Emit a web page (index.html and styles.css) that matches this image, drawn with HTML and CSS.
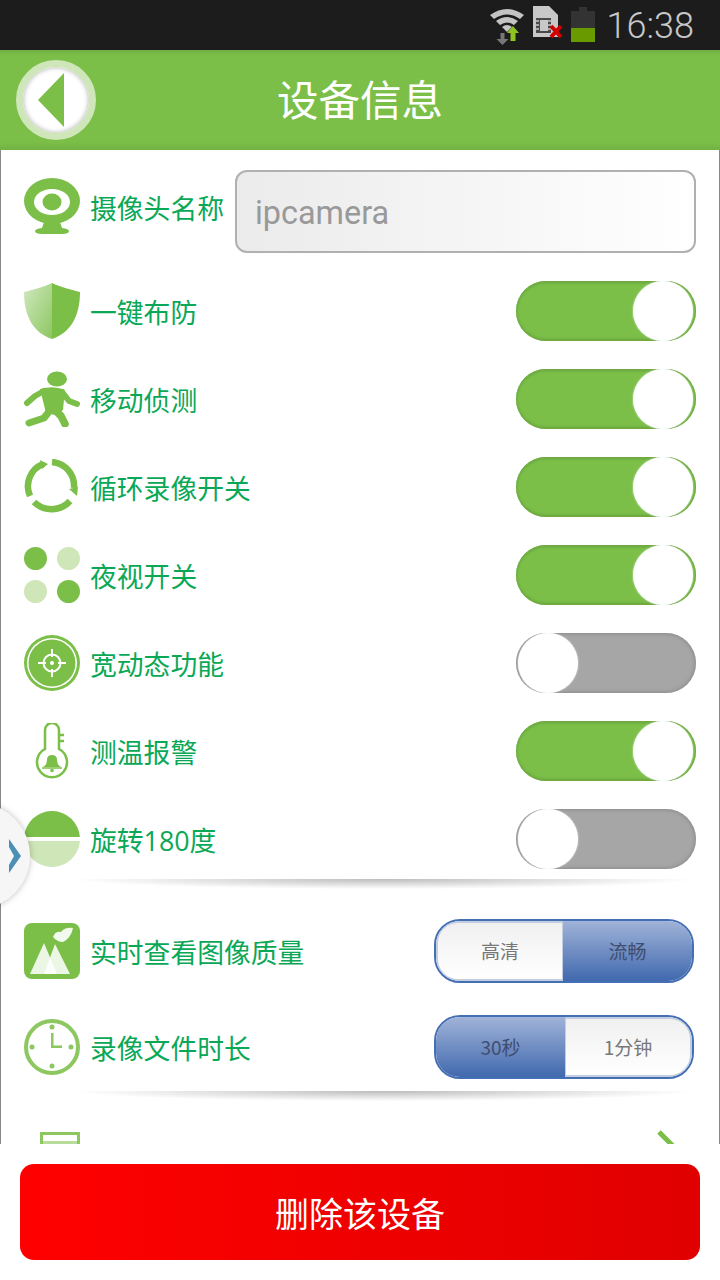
FILE: index.html
```html
<!DOCTYPE html>
<html>
  <head>
    <meta charset="utf-8">
    <title>设备信息</title>
    <link rel="stylesheet" href="styles.css">
  </head>
  <body>
    <div class="phone">
      <div class="status-bar">
        <svg class="st-wifi" width="36" height="38" viewBox="0 0 36 38">
          <path d="M1 7 Q18 -5 35 7 L31 11 Q18 2 5 11Z" fill="#c4c4c4"/>
          <path d="M7 13 Q18 5 29 13 L25 17 Q18 12 11 17Z" fill="#c4c4c4"/>
          <path d="M13 19 Q18 15 23 19 L18 24Z" fill="#c4c4c4"/>
          <path d="M11.500 25h4v6h4l-6 6l-6-6h4z" fill="#777"/>
          <path d="M24 18l6 7h-3.500v8h-5v-8h-3.500z" fill="#8fc31f"/>
        </svg>
        <svg class="st-sim" width="30" height="32" viewBox="0 0 30 32">
          <path d="M0 0H16L25 9V31H0Z" fill="#c8c8c8"/>
          <path d="M3 12H18V27H3Z" fill="#4a4a4a"/>
          <path d="M7 14H15V25H7Z" fill="#c8c8c8"/>
          <path d="M3 15H6M3 19H6M3 23H6M15 15H18M15 19H18M15 23H18" stroke="#c8c8c8" stroke-width="1.500"/>
          <path d="M18 20L28 31M28 20L18 31" stroke="#d00000" stroke-width="4"/>
        </svg>
        <svg class="st-batt" width="24" height="35" viewBox="0 0 24 35">
          <rect x="8" y="0" width="8" height="4" fill="#333"/>
          <rect x="0" y="4" width="24" height="17" fill="#333"/>
          <rect x="0" y="21" width="24" height="14" fill="#699b00"/>
        </svg>
        <span class="clock">16:38</span>
      </div>

      <div class="title-bar">
        <div class="back-btn">
          <svg width="28" height="54" viewBox="0 0 28 54"><path d="M0 27L26 0V54Z" fill="#7bbf49"/></svg>
        </div>
        <h1 class="title">设备信息</h1>
      </div>

      <div class="content">
        <div class="row name-row">
          <svg class="icon soft" viewBox="0 0 56 56">
            <ellipse cx="28" cy="23" rx="28" ry="23" fill="#7bbf49"/>
            <ellipse cx="28" cy="24" rx="18" ry="13" fill="#fff"/>
            <ellipse cx="28" cy="24" rx="9.500" ry="8.500" fill="#7bbf49"/>
            <path d="M20 44H36L38 50Q45 51 45 53Q45 56 38 56H18Q11 56 11 53Q11 51 18 50Z" fill="#7bbf49"/>
          </svg>
          <span class="label">摄像头名称</span>
          <div class="name-input">ipcamera</div>
        </div>

        <div class="row">
          <svg class="icon soft" viewBox="0 0 56 56">
            <defs>
              <linearGradient id="shieldGrad" x1="0" y1="0" x2="1" y2="1">
                <stop offset="0" stop-color="#d2e8c0"/>
                <stop offset="1" stop-color="#8cc760"/>
              </linearGradient>
            </defs>
            <path d="M28 0C20 4 8 7 0 9C0 34 10 50 28 56Z" fill="url(#shieldGrad)"/>
            <path d="M28 0C36 4 48 7 56 9C56 34 46 50 28 56Z" fill="#7bbf49"/>
          </svg>
          <span class="label">一键布防</span>
          <div class="toggle on"><span class="knob"></span></div>
        </div>

        <div class="row">
          <svg class="icon soft" viewBox="0 0 56 56">
            <ellipse cx="33" cy="8" rx="10" ry="7.500" fill="#7bbf49"/>
            <path d="M16 18Q30 14 41 19L39 39L31 44L22 42Z" fill="#7bbf49"/>
            <g fill="none" stroke="#7bbf49" stroke-linecap="round" stroke-linejoin="round">
              <path d="M20 20L11 25L3 32" stroke-width="6"/>
              <path d="M38 21L45 30L53 33" stroke-width="6"/>
              <path d="M27 38L20 47L5 52" stroke-width="7"/>
              <path d="M32 40L37 45L41 53" stroke-width="7.500"/>
            </g>
          </svg>
          <span class="label">移动侦测</span>
          <div class="toggle on"><span class="knob"></span></div>
        </div>

        <div class="row">
          <svg class="icon soft" viewBox="0 0 56 56">
            <g fill="none" stroke="#7bbf49" stroke-width="6.500">
              <path d="M19 5A24 24 0 0 0 6 37"/>
              <path d="M28 3A24 24 0 0 1 50 29"/>
              <path d="M10 43A25 25 0 0 0 46 42"/>
            </g>
            <path d="M45 30L54 28L53 37Z" fill="#7bbf49"/>
            <path d="M16 1L24 5L18 10Z" fill="#7bbf49"/>
          </svg>
          <span class="label">循环录像开关</span>
          <div class="toggle on"><span class="knob"></span></div>
        </div>

        <div class="row">
          <svg class="icon soft" viewBox="0 0 56 56">
            <circle cx="11.500" cy="11.500" r="11.500" fill="#7bbf49"/>
            <circle cx="44.500" cy="11.500" r="11.500" fill="#cfe6b8"/>
            <circle cx="11.500" cy="44.500" r="11.500" fill="#cfe6b8"/>
            <circle cx="44.500" cy="44.500" r="11.500" fill="#7bbf49"/>
          </svg>
          <span class="label">夜视开关</span>
          <div class="toggle on"><span class="knob"></span></div>
        </div>

        <div class="row">
          <svg class="icon" viewBox="0 0 56 56">
            <circle cx="28" cy="28" r="28" fill="#7bbf49"/>
            <circle cx="28" cy="28" r="25" fill="#fff"/>
            <circle cx="28" cy="28" r="23.500" fill="#7bbf49"/>
            <circle cx="28" cy="28" r="8.500" fill="none" stroke="#fff" stroke-width="2"/>
            <circle cx="28" cy="28" r="2" fill="#fff"/>
            <path d="M28 14V42M14 28H42" stroke="#fff" stroke-width="2" stroke-dasharray="8 12"/>
          </svg>
          <span class="label">宽动态功能</span>
          <div class="toggle off"><span class="knob"></span></div>
        </div>

        <div class="row">
          <svg class="icon soft" viewBox="0 0 56 56" fill="none" stroke="#7bbf49" stroke-width="2.500">
            <path d="M21 27V8A7 7 0 0 1 35 8V27A15 15 0 1 1 21 27Z" transform="translate(0 -1)"/>
            <path d="M35 12H40M35 18H40"/>
            <path d="M19 44Q23 42 23 37Q23 32 28 32Q33 32 33 37Q33 42 37 44Z" fill="#7bbf49" stroke="none"/>
            <path d="M18 45H38" stroke-width="1.500"/>
            <circle cx="28" cy="47.500" r="1.800" fill="#7bbf49" stroke="none"/>
          </svg>
          <span class="label">测温报警</span>
          <div class="toggle on"><span class="knob"></span></div>
        </div>

        <div class="row">
          <svg class="icon soft" viewBox="0 0 56 56">
            <path d="M0.070 26A28 28 0 0 1 55.930 26Z" fill="#7bbf49"/>
            <path d="M0.070 30A28 28 0 0 0 55.930 30Z" fill="#cfe6b8"/>
          </svg>
          <span class="label">旋转180度</span>
          <div class="toggle off"><span class="knob"></span></div>
        </div>

        <div class="divider first-divider"></div>

        <div class="row seg-row">
          <svg class="icon soft" viewBox="0 0 56 56">
            <rect width="56" height="56" rx="8" fill="#7bbf49"/>
            <path d="M6 51L20 20L33 51Z" fill="#fff" opacity="0.85"/>
            <path d="M20 51L31 21L46 51Z" fill="#fff" opacity="0.85"/>
            <path d="M29 14Q31 8 37 9Q41 4 49 5Q47 15 39 19Q33 19 29 14Z" fill="#fff" opacity="0.9"/>
          </svg>
          <span class="label">实时查看图像质量</span>
          <div class="segment">
            <span class="seg-item seg-off left">高清</span>
            <span class="seg-item seg-on">流畅</span>
          </div>
        </div>

        <div class="row seg-row">
          <svg class="icon soft" viewBox="0 0 56 56" fill="#8cc760">
            <circle cx="28" cy="28" r="26" fill="none" stroke="#8cc760" stroke-width="4"/>
            <circle cx="28" cy="8" r="2.500"/>
            <circle cx="28" cy="47" r="2.500"/>
            <circle cx="8" cy="28" r="2.500"/>
            <circle cx="47" cy="28" r="2.500"/>
            <path d="M27 14H29.500V26.500H38V29H27Z"/>
          </svg>
          <span class="label">录像文件时长</span>
          <div class="segment">
            <span class="seg-item seg-on">30秒</span>
            <span class="seg-item seg-off right">1分钟</span>
          </div>
        </div>

        <div class="divider"></div>

        <div class="row more-row">
          <svg class="more-icon soft" viewBox="0 0 40 56">
            <rect x="0" y="0" width="40" height="56" fill="#8cc760"/>
            <rect x="3" y="3" width="34" height="50" fill="#fff"/>
            <rect x="3" y="9" width="34" height="3" fill="#b8dc9c"/>
          </svg>
          <svg class="more-arrow" viewBox="0 0 24 40">
            <path d="M2 2L20 20L2 38" fill="none" stroke="#7bbf49" stroke-width="5"/>
          </svg>
        </div>
      </div>

      <div class="bottom-bar">
        <button class="delete-btn">删除该设备</button>
      </div>

      <div class="side-tab">
        <svg width="13" height="34" viewBox="0 0 13 34"><path d="M0 0L12 17L0 34L0 26L5 17L0 8Z" fill="#4a8fb5"/></svg>
      </div>
    </div>
  </body>
</html>
```

FILE: styles.css
```css
* {
  box-sizing: border-box;
}
body {
  margin: 0;
  font-family: "Noto Sans CJK SC", "Noto Sans", sans-serif;
  background: #fff;
}
.phone {
  position: relative;
  width: 720px;
  height: 1280px;
  overflow: hidden;
  display: flex;
  flex-direction: column;
}

/* status bar */
.status-bar {
  height: 50px;
  flex: none;
  background: #1c1c1c;
  display: flex;
  align-items: flex-start;
  padding: 7px 26px 0 0;
  justify-content: flex-end;
}
.st-wifi {
  margin-right: 8px;
  margin-top: 1px;
}
.st-sim {
  margin-right: 8px;
  margin-top: -1px;
}
.st-batt {
  margin-right: 12px;
}
.clock {
  font-family: Roboto, sans-serif;
  font-weight: 300;
  font-size: 36px;
  line-height: 38px;
  color: #c8c8c8;
}

/* title bar */
.title-bar {
  height: 100px;
  flex: none;
  background: linear-gradient(#6fae43 0, #7bbf49 5px, #7bbf49 92px, #72b045 100px);
  display: flex;
  align-items: center;
  justify-content: center;
  position: relative;
  padding-bottom: 4px;
}
.back-btn {
  position: absolute;
  left: 16px;
  top: 10px;
  width: 80px;
  height: 80px;
  border-radius: 50%;
  background: #fff;
  border: 7px solid #cfe6bb;
  box-shadow: inset 0 0 5px #aaa;
  display: flex;
  align-items: center;
  padding-left: 15px;
}
.title {
  margin: 0;
  font-size: 41.5px;
  font-weight: 400;
  color: #fff;
}

/* list */
.content {
  flex: 1;
  min-height: 0;
  overflow: hidden;
  padding: 20px 24px 0;
  border-left: 1px solid #888;
  border-right: 1px solid #888;
  display: flex;
  flex-direction: column;
  gap: 28px;
}
.row {
  display: flex;
  align-items: center;
  flex: none;
  height: 60px;
}
.icon {
  width: 56px;
  height: 56px;
  flex: none;
  margin-left: -1px;
  margin-right: 10px;
}
.soft {
  filter: blur(0.5px);
}
.label {
  font-family: "Open Sans", "Noto Sans CJK SC", sans-serif;
  font-size: 26.8px;
  line-height: 36px;
  padding-top: 3px;
  color: #0aa856;
  white-space: nowrap;
}
.name-row {
  height: 83px;
  align-items: flex-start;
}
.name-row .icon {
  margin-top: 8px;
}
.name-row .label {
  margin-top: 18px;
}
.name-input {
  margin-left: 11px;
  flex: 1;
  height: 83px;
  margin-right: -1px;
  border: 2px solid #b0b0b0;
  border-radius: 12px;
  background: linear-gradient(90deg, #ebebeb, #fff);
  font-family: Roboto, sans-serif;
  font-size: 32.4px;
  line-height: 82px;
  padding-left: 18px;
  color: #999;
}

/* switches */
.toggle {
  margin-left: auto;
  margin-right: -1px;
  width: 180px;
  height: 60px;
  border-radius: 30px;
  display: flex;
  align-items: center;
  padding: 0 3px 0 2px;
}
.toggle.on {
  background: #7bbf49;
  box-shadow: inset 0 2px 3px #6ba53f, inset 0 -2px 3px #6ba53f;
  justify-content: flex-end;
}
.toggle.off {
  background: #a6a6a6;
  box-shadow: inset 0 0 4px #7d7d7d;
}
.knob {
  width: 60px;
  height: 60px;
  border-radius: 50%;
  background: #fff;
  box-shadow: 0 0 2px rgba(255, 255, 255, 0.9);
}

/* separators */
.divider {
  flex: none;
  height: 10px;
  margin: -20px 0 -8px 48px;
  background: radial-gradient(ellipse 50% 100% at 50% 0, #bcbcbc, rgba(255, 255, 255, 0));
}
.first-divider {
  margin: -18px 0 2px 48px;
}

/* two-way selectors */
.seg-row {
  height: 64px;
  margin-bottom: 4px;
}
.segment {
  margin-left: auto;
  margin-right: 1px;
  width: 260px;
  height: 64px;
  border: 2px solid #456fb5;
  border-radius: 26px;
  display: flex;
  overflow: hidden;
  background: #fff;
}
.seg-item {
  display: flex;
  align-items: center;
  justify-content: center;
  font-size: 19px;
  padding-bottom: 2px;
}
.seg-off {
  width: 127px;
  color: #777;
  background: linear-gradient(#f0f0f0, #fff);
  border: 2px solid #c2cde0;
}
.seg-off.left {
  border-right-width: 1px;
  border-radius: 22px 0 0 22px;
}
.seg-off.right {
  border-left-width: 1px;
  border-radius: 0 22px 22px 0;
}
.seg-on {
  flex: 1;
  color: #3f4d70;
  background: linear-gradient(#a0b3d8, #4169ae);
}

/* cut-off row */
.more-row {
  margin-top: 11px;
  height: 56px;
  align-items: flex-start;
}
.more-icon {
  width: 40px;
  height: 56px;
  margin-left: 15px;
}
.more-arrow {
  width: 24px;
  height: 40px;
  margin-left: auto;
  margin-right: 14px;
  margin-top: -2px;
}

/* delete */
.bottom-bar {
  height: 136px;
  flex: none;
  background: #fff;
  padding: 20px;
}
.delete-btn {
  display: block;
  width: 100%;
  height: 96px;
  border: none;
  border-radius: 14px;
  background: linear-gradient(90deg, #ff0000, #e00000);
  color: #fff;
  font-family: inherit;
  font-size: 34px;
}

/* slide-out tab */
.side-tab {
  position: absolute;
  left: -76px;
  top: 803px;
  width: 106px;
  height: 106px;
  border-radius: 50%;
  background: #f6f6f6;
  box-shadow: 0 0 6px rgba(0, 0, 0, 0.25);
  display: flex;
  align-items: center;
  justify-content: flex-end;
  padding-right: 8px;
}
```
